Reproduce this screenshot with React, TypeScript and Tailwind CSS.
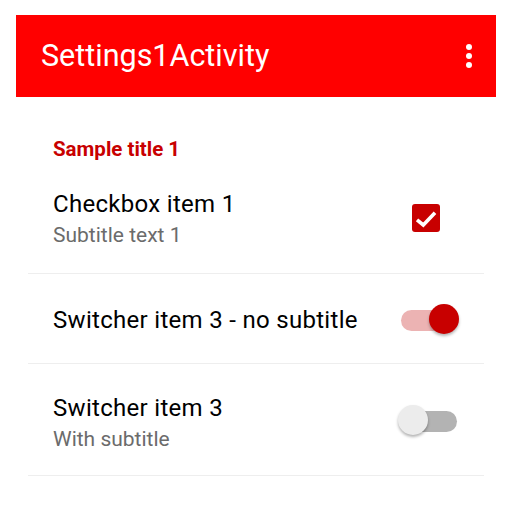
import { useState } from 'react';

function Switch({ on, onToggle }: { on: boolean; onToggle: () => void }) {
  return (
    <button type="button" onClick={onToggle} className="relative w-[61px] h-[30px] flex items-center">
      <span
        className={`absolute left-[3px] right-[2px] top-[6px] h-[21px] rounded-full ${on ? 'bg-[#ecb3b3]' : 'bg-[#b3b3b3]'}`}
      />
      <span
        className={`absolute top-0 w-[30px] h-[30px] rounded-full shadow-[0_2px_3px_rgba(0,0,0,0.3)] ${
          on ? 'right-0 bg-[#c80000]' : 'left-0 bg-[#ececec]'
        }`}
      />
    </button>
  );
}

function Checkbox({ checked, onToggle }: { checked: boolean; onToggle: () => void }) {
  return (
    <button
      type="button"
      onClick={onToggle}
      className={`w-[28px] h-[28px] rounded-[3px] flex items-center justify-center ${
        checked ? 'bg-[#c80000]' : 'border-2 border-[#777]'
      }`}
    >
      {checked && (
        <svg width="28" height="28" viewBox="0 0 28 28">
          <path d="M5 15.8 L11.3 21 L23 8.7" fill="none" stroke="white" strokeWidth="3.6" />
        </svg>
      )}
    </button>
  );
}

export default function App() {
  const [checked, setChecked] = useState(true);
  const [sw1, setSw1] = useState(true);
  const [sw2, setSw2] = useState(false);

  return (
    <div className="w-[512px] h-[512px] bg-white pt-[15px] px-4" style={{ fontFamily: 'Roboto, sans-serif' }}>
      {/* Toolbar */}
      <div className="h-[82px] bg-[#ff0000] flex items-center justify-between pl-[25px] pr-[24px]">
        <span className="text-white text-[30.5px] leading-none">Settings1Activity</span>
        <div className="flex flex-col items-center gap-[3px]">
          <span className="w-[6px] h-[6px] rounded-full bg-white" />
          <span className="w-[6px] h-[6px] rounded-full bg-white" />
          <span className="w-[6px] h-[6px] rounded-full bg-white" />
        </div>
      </div>

      <div className="px-3">
        {/* Category */}
        <div className="h-[66px] pl-[25px] pt-[42px]">
          <span className="text-[#c80000] text-[20.5px] font-bold leading-none">Sample title 1</span>
        </div>

        {/* Checkbox item */}
        <div className="h-[111px] flex items-center justify-between pl-[25px] pr-[25px] border-b border-[#eeeeee]">
          <div className="flex flex-col pt-[2px]">
            <span className="text-[24px] leading-[28px] tracking-[0.3px] text-black">Checkbox item 1</span>
            <span className="text-[21px] leading-[26px] text-[#6b6b6b] mt-[4px]">Subtitle text 1</span>
          </div>
          <div className="w-[61px] flex pl-[14px]">
            <Checkbox checked={checked} onToggle={() => setChecked(!checked)} />
          </div>
        </div>

        {/* Switch item, no subtitle */}
        <div className="h-[90px] flex items-center justify-between pl-[25px] pr-[25px] border-b border-[#eeeeee]">
          <span className="text-[24px] leading-[28px] tracking-[0.3px] text-black pt-[2px]">
            Switcher item 3 - no subtitle
          </span>
          <Switch on={sw1} onToggle={() => setSw1(!sw1)} />
        </div>

        {/* Switch item with subtitle */}
        <div className="h-[112px] flex items-center justify-between pl-[25px] pr-[25px] border-b border-[#eeeeee]">
          <div className="flex flex-col pt-[6px]">
            <span className="text-[24px] leading-[28px] tracking-[0.3px] text-black">Switcher item 3</span>
            <span className="text-[21px] leading-[26px] text-[#6b6b6b] mt-[4px]">With subtitle</span>
          </div>
          <Switch on={sw2} onToggle={() => setSw2(!sw2)} />
        </div>
      </div>
    </div>
  );
}
